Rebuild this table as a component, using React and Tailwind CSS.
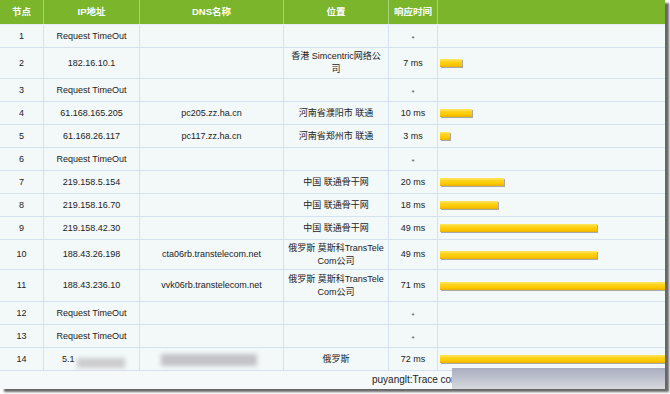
const rows = [
  { n: 1, ip: 'Request TimeOut', dns: '', loc: [], ms: null, h: 'h-[23px]' },
  { n: 2, ip: '182.16.10.1', dns: '', loc: ['香港 Simcentric网络公', '司'], ms: 7, h: 'h-[31px]' },
  { n: 3, ip: 'Request TimeOut', dns: '', loc: [], ms: null, h: 'h-[23px]' },
  { n: 4, ip: '61.168.165.205', dns: 'pc205.zz.ha.cn', loc: ['河南省濮阳市 联通'], ms: 10, h: 'h-[23px]' },
  { n: 5, ip: '61.168.26.117', dns: 'pc117.zz.ha.cn', loc: ['河南省郑州市 联通'], ms: 3, h: 'h-[23px]' },
  { n: 6, ip: 'Request TimeOut', dns: '', loc: [], ms: null, h: 'h-[23px]' },
  { n: 7, ip: '219.158.5.154', dns: '', loc: ['中国 联通骨干网'], ms: 20, h: 'h-[23px]' },
  { n: 8, ip: '219.158.16.70', dns: '', loc: ['中国 联通骨干网'], ms: 18, h: 'h-[23px]' },
  { n: 9, ip: '219.158.42.30', dns: '', loc: ['中国 联通骨干网'], ms: 49, h: 'h-[23px]' },
  { n: 10, ip: '188.43.26.198', dns: 'cta06rb.transtelecom.net', loc: ['俄罗斯 莫斯科TransTele', 'Com公司'], ms: 49, h: 'h-[30px]' },
  { n: 11, ip: '188.43.236.10', dns: 'vvk06rb.transtelecom.net', loc: ['俄罗斯 莫斯科TransTele', 'Com公司'], ms: 71, h: 'h-[32px]' },
  { n: 12, ip: 'Request TimeOut', dns: '', loc: [], ms: null, h: 'h-[23px]' },
  { n: 13, ip: 'Request TimeOut', dns: '', loc: [], ms: null, h: 'h-[23px]' },
  { n: 14, ip: '5.1', dns: '', loc: ['俄罗斯'], ms: 72, h: 'h-[23px]', blur: true },
];

const cols = 'grid grid-cols-[44px_96px_144px_105px_49px_227px]';
const cell = 'flex items-center justify-center text-center border-r border-[#d6e1ee]';

export default function App() {
  return (
    <div className="w-[670px] h-[394px] bg-white overflow-hidden font-['Liberation_Sans','Noto_Sans_CJK_SC',sans-serif] text-[9px] text-[#222]">
      <div className="relative w-[665px] bg-[#f3f8f9] shadow-[4px_3px_2px_rgba(0,0,0,0.6)]">
        {/* header */}
        <div className={`${cols} h-[25px] bg-[#7ab52c] text-white font-bold text-[9.5px] border-b border-[#e6eef5]`}>
          <div className="flex items-center justify-center border-r border-[#a9d17c]">节点</div>
          <div className="flex items-center justify-center border-r border-[#a9d17c]">IP地址</div>
          <div className="flex items-center justify-center border-r border-[#a9d17c]">DNS名称</div>
          <div className="flex items-center justify-center border-r border-[#a9d17c]">位置</div>
          <div className="flex items-center justify-center border-r border-[#a9d17c]">响应时间</div>
          <div></div>
        </div>
        {rows.map((r) => (
          <div key={r.n} className={`${cols} ${r.h} border-b border-[#d6e1ee] leading-[13px]`}>
            <div className={cell}>{r.n}</div>
            <div className={`${cell} relative`}>
              {r.blur ? (
                <div className="w-full flex items-center pl-[18px]">
                  <span>{r.ip}</span>
                  <span className="ml-[2px] w-[48px] h-[10px] mt-[7px] bg-[#cdcdd0] blur-[2px]"></span>
                </div>
              ) : (
                r.ip
              )}
            </div>
            <div className={`${cell} relative`}>
              {r.blur ? (
                <span className="ml-[-6px] w-[96px] h-[12px] mt-[1px] bg-[#c4c4c8] blur-[2px]"></span>
              ) : (
                r.dns
              )}
            </div>
            <div className={cell}>
              <div>
                {r.loc.map((l, i) => (
                  <div key={i} className="whitespace-nowrap">{l}</div>
                ))}
              </div>
            </div>
            <div className={cell}>
              {r.ms === null ? <span className="text-[#555] text-[8px] mt-[4px]">*</span> : `${r.ms} ms`}
            </div>
            <div className="flex items-center overflow-hidden pl-[2px]">
              {r.ms !== null && (
                <div
                  className="shrink-0 h-[8px] bg-[linear-gradient(to_bottom,#ffe766_0%,#ffd21a_35%,#ffc800_70%,#e8b000_100%)] shadow-[1px_1px_0_#a8a8a8]"
                  style={{ width: `${Math.round(r.ms * 3.2)}px` }}
                ></div>
              )}
            </div>
          </div>
        ))}
        {/* footer */}
        <div className="relative h-[18px] bg-[#f5f9fa] flex items-end pb-[2px] text-[10px] text-[#222]">
          <span className="pl-[372px] w-full">puyanglt:Trace complete</span>
          <div className="absolute left-[452px] top-[-3px] w-[213px] h-[21px] bg-[linear-gradient(to_bottom,#a9adbe_0%,#bfc2cf_50%,#d9d9dd_100%)]"></div>
        </div>
      </div>
    </div>
  );
}
